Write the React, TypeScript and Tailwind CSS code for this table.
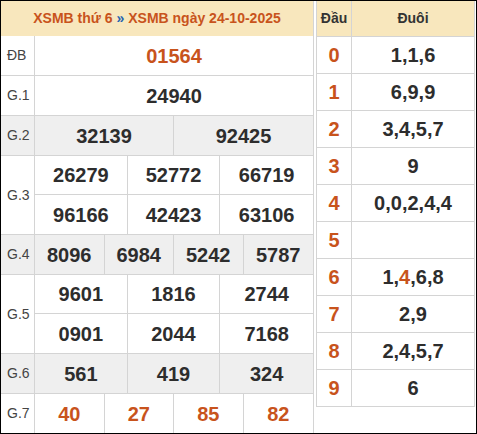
import React from "react";

const ORANGE = "text-[#c8531c]";

type Row = { label: string; lines: string[][]; gray?: boolean; red?: boolean };

const rows: Row[] = [
  { label: "ĐB", lines: [["01564"]], red: true },
  { label: "G.1", lines: [["24940"]] },
  { label: "G.2", lines: [["32139", "92425"]], gray: true },
  { label: "G.3", lines: [["26279", "52772", "66719"], ["96166", "42423", "63106"]] },
  { label: "G.4", lines: [["8096", "6984", "5242", "5787"]], gray: true },
  { label: "G.5", lines: [["9601", "1816", "2744"], ["0901", "2044", "7168"]] },
  { label: "G.6", lines: [["561", "419", "324"]], gray: true },
  { label: "G.7", lines: [["40", "27", "85", "82"]], red: true },
];

const loto: [string, string[]][] = [
  ["0", ["1", "1", "6"]],
  ["1", ["6", "9", "9"]],
  ["2", ["3", "4", "5", "7"]],
  ["3", ["9"]],
  ["4", ["0", "0", "2", "4", "4"]],
  ["5", []],
  ["6", ["1", "4", "6", "8"]],
  ["7", ["2", "9"]],
  ["8", ["2", "4", "5", "7"]],
  ["9", ["6"]],
];

const cols: Record<number, string> = {
  1: "grid-cols-1",
  2: "grid-cols-2",
  3: "grid-cols-3",
  4: "grid-cols-4",
};

function ResultRow({ row, last }: { row: Row; last: boolean }) {
  return (
    <div
      className={`flex ${last ? "flex-1" : "border-b border-[#d4d4d4]"} ${
        row.gray ? "bg-[#efefef]" : "bg-white"
      }`}
    >
      <div className="w-[34px] shrink-0 flex items-center pl-[6px] border-r border-[#d4d4d4] text-[14px] text-[#444]">
        {row.label}
      </div>
      <div className="flex-1 flex flex-col">
        {row.lines.map((line, i) => (
          <div
            key={i}
            className={`grid ${cols[line.length]} ${
              last ? "h-full" : "h-[39px]"
            } ${i < row.lines.length - 1 ? "border-b border-[#d4d4d4]" : ""}`}
          >
            {line.map((n, j) => (
              <div
                key={j}
                className={`flex items-center justify-center font-bold text-[20px] ${
                  row.red ? ORANGE : "text-[#2d2d2d]"
                } ${j < line.length - 1 ? "border-r border-[#d4d4d4]" : ""}`}
              >
                {n}
              </div>
            ))}
          </div>
        ))}
      </div>
    </div>
  );
}

export default function App() {
  return (
    <div
      className="w-[477px] h-[434px] border border-black bg-white flex"
      style={{ fontFamily: '"Liberation Sans", Arial, sans-serif' }}
    >
      <div className="w-[313px] flex flex-col border-r border-[#d4d4d4]">
        <div className="h-[35px] shrink-0 bg-[#f8e7bd] flex items-center justify-center font-bold text-[14px] text-[#c8531c]">
          XSMB thứ 6&nbsp;<span className="text-[#2563b0]">»</span>&nbsp;XSMB ngày 24-10-2025
        </div>
        {rows.map((r, i) => (
          <ResultRow key={r.label} row={r} last={i === rows.length - 1} />
        ))}
      </div>
      <div className="ml-[2px] w-[159px] self-start border-x border-b border-[#d4d4d4]">
        <div className="h-[35px] flex bg-[#f8e7bd] font-bold text-[14px] text-[#333]">
          <div className="w-[35px] flex items-center justify-center border-r border-[#d4d4d4]">Đầu</div>
          <div className="flex-1 flex items-center justify-center">Đuôi</div>
        </div>
        {loto.map(([head, tails]) => (
          <div key={head} className="h-[37px] flex border-t border-[#d4d4d4] font-bold text-[20px]">
            <div className={`w-[35px] flex items-center justify-center border-r border-[#d4d4d4] ${ORANGE}`}>
              {head}
            </div>
            <div className="flex-1 flex items-center justify-center text-[#2d2d2d]">
              {tails.map((t, k) => (
                <React.Fragment key={k}>
                  {k > 0 && ","}
                  <span className={head === "6" && k === 1 ? ORANGE : ""}>{t}</span>
                </React.Fragment>
              ))}
            </div>
          </div>
        ))}
      </div>
    </div>
  );
}
